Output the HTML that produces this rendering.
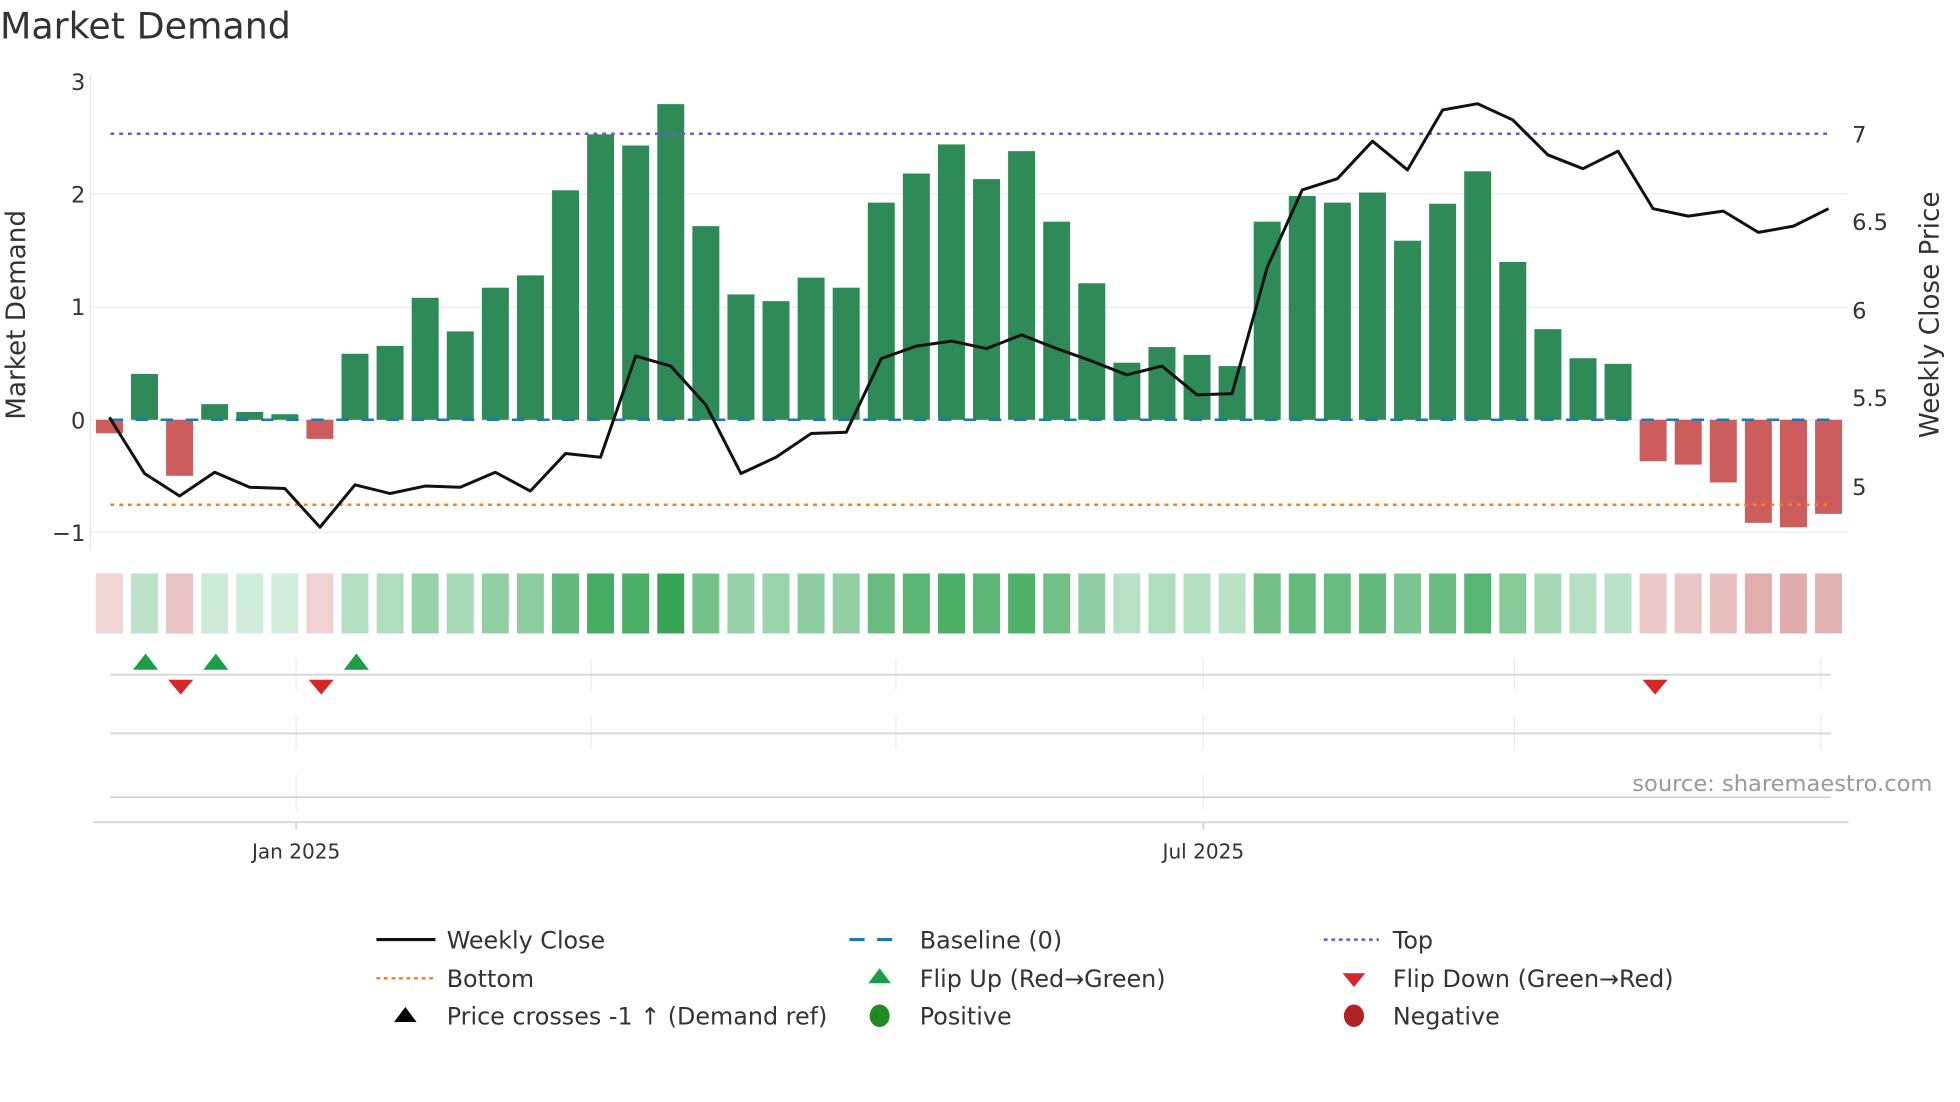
<!DOCTYPE html>
<html><head><meta charset="utf-8"><style>
html,body{margin:0;padding:0;background:#fff;}
svg{display:block;font-family:"DejaVu Sans","Liberation Sans",sans-serif;}
</style></head><body>
<svg id="s" width="1960" height="1102" viewBox="0 0 1562 882" preserveAspectRatio="none" xmlns="http://www.w3.org/2000/svg">
<text x="0" y="31" font-size="29" fill="#333">Market Demand</text>
<g id="grid" stroke="#ececec" stroke-width="1">
<line x1="72" y1="155" x2="1472" y2="155"/><line x1="72" y1="246" x2="1472" y2="246"/>
<line x1="72" y1="426" x2="1472" y2="426"/><line x1="72" y1="336" x2="1472" y2="336"/>
</g>
<line x1="72" y1="60" x2="72" y2="440" stroke="#e6e6e6"/>
<g font-size="18" fill="#333" text-anchor="end">
<text x="68" y="72">3</text><text x="68" y="162">2</text><text x="68" y="252">1</text><text x="68" y="343">0</text><text x="68" y="433">−1</text>
</g>
<g font-size="18" fill="#333">
<text x="1476" y="114">7</text><text x="1476" y="184">6.5</text><text x="1476" y="255">6</text><text x="1476" y="325">5.5</text><text x="1476" y="396">5</text>
</g>
<text transform="translate(20,252) rotate(-90)" font-size="21" fill="#333" text-anchor="middle">Market Demand</text>
<text transform="translate(1545,252) rotate(-90)" font-size="21" fill="#333" text-anchor="middle">Weekly Close Price</text>
<g id="bars"></g>
<line x1="88" y1="336" x2="1459" y2="336" stroke="#1f77b4" stroke-width="2" stroke-dasharray="10,10"/>
<line x1="88" y1="107" x2="1459" y2="107" stroke="#6a5acd" stroke-width="2" stroke-dasharray="3,4"/>
<line x1="88" y1="404" x2="1459" y2="404" stroke="#ff7f0e" stroke-width="2" stroke-dasharray="3,4"/>
<polyline id="price" fill="none" stroke="#111" stroke-width="2.4" stroke-linejoin="round"/>
<g id="cells"></g>
<g stroke="#ececec">
<line x1="236" y1="527" x2="236" y2="552"/><line x1="471" y1="527" x2="471" y2="552"/><line x1="714" y1="527" x2="714" y2="552"/><line x1="959" y1="527" x2="959" y2="552"/><line x1="1207" y1="527" x2="1207" y2="552"/><line x1="1451" y1="527" x2="1451" y2="552"/>
<line x1="236" y1="573" x2="236" y2="600"/><line x1="471" y1="573" x2="471" y2="600"/><line x1="714" y1="573" x2="714" y2="600"/><line x1="959" y1="573" x2="959" y2="600"/><line x1="1207" y1="573" x2="1207" y2="600"/><line x1="1451" y1="573" x2="1451" y2="600"/>
<line x1="236" y1="620" x2="236" y2="648"/><line x1="959" y1="620" x2="959" y2="648"/>
</g>
<g stroke="#d6d6d6" stroke-width="1.5">
<line x1="88" y1="540" x2="1459" y2="540"/><line x1="88" y1="587" x2="1459" y2="587"/><line x1="88" y1="638" x2="1459" y2="638"/>
<line x1="74" y1="658" x2="1473" y2="658"/><line x1="236" y1="658" x2="236" y2="664"/><line x1="959" y1="658" x2="959" y2="664"/>
</g>
<g fill="#1a9e48">
<polygon points="106,536 116,523 126,536"/><polygon points="162,536 172,523 182,536"/><polygon points="274,536 284,523 294,536"/>
</g>
<g fill="#d62728">
<polygon points="134,544 154,544 144,556"/><polygon points="246,544 266,544 256,556"/><polygon points="1309,544 1329,544 1319,556"/>
</g>
<g font-size="16" fill="#333" text-anchor="middle"><text x="236" y="687">Jan 2025</text><text x="959" y="687">Jul 2025</text></g>
<text x="1540" y="633" font-size="18" fill="#999" text-anchor="end">source: sharemaestro.com</text>
<g font-size="19" fill="#333">
<line x1="300" y1="752" x2="347" y2="752" stroke="#111" stroke-width="2.5"/><text x="356" y="759">Weekly Close</text>
<line x1="677" y1="752" x2="720" y2="752" stroke="#1f77b4" stroke-width="2.5" stroke-dasharray="12,10"/><text x="733" y="759">Baseline (0)</text>
<line x1="1055" y1="752" x2="1099" y2="752" stroke="#6a5acd" stroke-width="2" stroke-dasharray="3,3"/><text x="1110" y="759">Top</text>
<line x1="300" y1="783" x2="347" y2="783" stroke="#ff7f0e" stroke-width="2" stroke-dasharray="3,3"/><text x="356" y="790">Bottom</text>
<polygon points="692,787 701,775 710,787" fill="#1a9e48"/><text x="733" y="790">Flip Up (Red→Green)</text>
<polygon points="1070,779 1088,779 1079,790" fill="#d62728"/><text x="1110" y="790">Flip Down (Green→Red)</text>
<polygon points="314,818 323,806 332,818" fill="#000"/><text x="356" y="820">Price crosses -1 ↑ (Demand ref)</text>
<ellipse cx="701" cy="813" rx="8" ry="9" fill="#228b22"/><text x="733" y="820">Positive</text>
<ellipse cx="1079" cy="813" rx="8" ry="9" fill="#b22222"/><text x="1110" y="820">Negative</text>
</g>
</svg>
<script>
var v=[-0.12,0.41,-0.5,0.14,0.07,0.05,-0.17,0.59,0.66,1.09,0.79,1.18,1.29,2.05,2.55,2.45,2.82,1.73,1.12,1.06,1.27,1.18,1.94,2.2,2.46,2.15,2.4,1.77,1.22,0.51,0.65,0.58,0.48,1.77,2.0,1.94,2.03,1.6,1.93,2.22,1.41,0.81,0.55,0.5,-0.37,-0.4,-0.56,-0.92,-0.96,-0.84];
var p=[334,379,397,378,390,391,422,388,395,389,390,378,393,363,366,285,293,324,379,366,347,346,287,277,273,279,268,279,289,300,293,316,315,214,152,143,113,136,88,83,96,124,135,121,167,173,169,186,181,167];
var NS="http://www.w3.org/2000/svg",bars=document.getElementById('bars'),cells=document.getElementById('cells'),pts=[];
function lerp(a,b,t){return a.map(function(x,i){return Math.round(x+(b[i]-x)*t)});}
for(var i=0;i<50;i++){
 var cx=87.2+i*27.96,y0=336,h=v[i]*89.6;
 var r=document.createElementNS(NS,'rect');
 r.setAttribute('x',cx-10.75);r.setAttribute('width',21.5);
 r.setAttribute('y',h>0?y0-h:y0);r.setAttribute('height',Math.abs(h));
 r.setAttribute('fill',v[i]>0?'#2e8b57':'#cd5c5c');bars.appendChild(r);
 var c=document.createElementNS(NS,'rect');
 c.setAttribute('x',cx-10.75);c.setAttribute('width',21.5);c.setAttribute('y',459);c.setAttribute('height',48);
 var col=v[i]>0?lerp([212,238,221],[56,165,86],Math.pow(v[i]/2.82,1.0)):lerp([243,218,218],[224,171,171],Math.abs(v[i])/0.96);
 c.setAttribute('fill','rgb('+col.join(',')+')');cells.appendChild(c);
 pts.push(cx.toFixed(1)+','+p[i]);
}
document.getElementById('price').setAttribute('points',pts.join(' '));
</script>
</body></html>
